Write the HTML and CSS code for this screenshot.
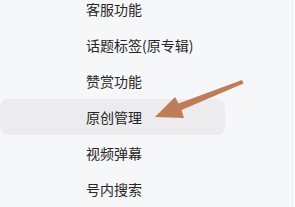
FILE: index.html
```html
<!DOCTYPE html>
<html lang="zh-CN">
<head>
  <meta charset="UTF-8">
  <title>功能设置</title>
  <link rel="stylesheet" href="styles.css">
</head>
<body>
  <div class="page">
    <ul class="menu">
      <li class="menu-item">客服功能</li>
      <li class="menu-item">话题标签(原专辑)</li>
      <li class="menu-item">赞赏功能</li>
      <li class="menu-item active">原创管理</li>
      <li class="menu-item">视频弹幕</li>
      <li class="menu-item">号内搜索</li>
    </ul>
    <div class="side"></div>

    <!-- 指向箭头 -->
    <svg class="pointer" width="295" height="207" viewBox="0 0 295 207">
      <polygon fill="#c07b57" points="155,117 175,97 178.5,103.5 242,80 243.5,83.5 181.5,110 184,118"/>
    </svg>
  </div>
</body>
</html>
```

FILE: styles.css
```css
body {
  margin: 0;
  background: #f6f7f9;
  font-family: "Noto Sans CJK SC", "Noto Sans", sans-serif;
}

.page {
  position: relative;
  display: flex;
  width: 295px;
  height: 207px;
  overflow: hidden;
}

.menu {
  list-style: none;
  margin: -9px 0 0 0;
  padding: 0;
  width: 225px;
}

.menu-item {
  height: 36px;
  line-height: 36px;
  padding-left: 86px;
  font-size: 14px;
  color: #262626;
  border-radius: 8px;
  white-space: nowrap;
}

.menu-item.active {
  background: #ececee;
}

.side {
  margin-left: auto;
  width: 2px;
  background: #fafbfc;
  border-left: 1px solid #eeeff1;
}

.pointer {
  position: absolute;
  left: 0;
  top: 0;
}
```
